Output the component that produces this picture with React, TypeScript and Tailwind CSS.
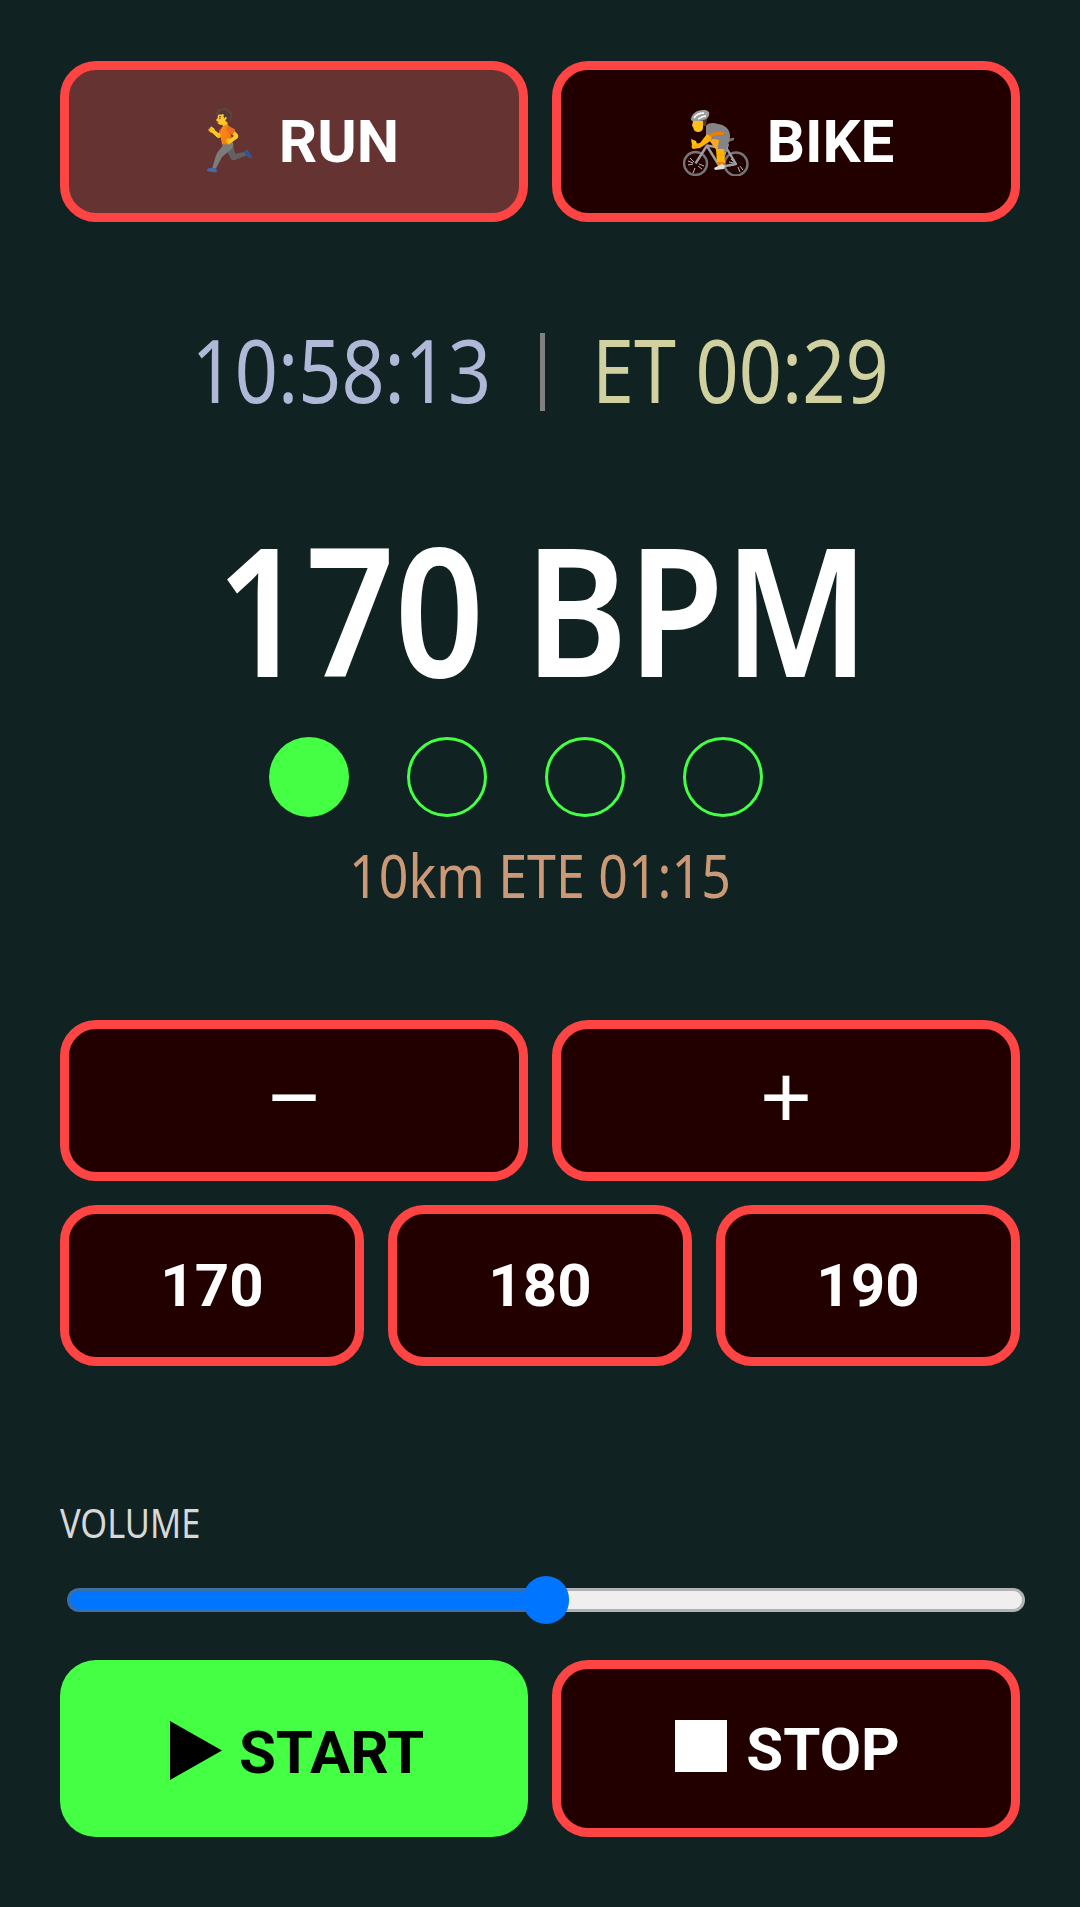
// App.tsx
import React from "react";

const btn =
  "flex items-center justify-center rounded-[36px] border-[9px] border-[#ff4444] bg-[#220000] font-bold text-white";

const BikeIcon: React.FC = () => (
  <svg width="66" height="68" viewBox="12 6 66 68" className="ml-[5px]">
    {/* wheels */}
    <circle cx="24.5" cy="61.5" r="11.5" fill="none" stroke="#757575" strokeWidth="2.4" />
    <circle cx="65" cy="62" r="11.5" fill="none" stroke="#757575" strokeWidth="2.4" />
    <path
      d="M19 56l4 4M17 59l5 2M17 63l5-1M27 64l4 3M28 62l5 2M24 66l-2 5M60 57l3 3M58 60l5 1M58 64l5-1M67 65l2 5M69 64l3 4"
      stroke="#e8e8e8"
      strokeWidth="0.8"
      fill="none"
    />
    {/* frame */}
    <path
      d="M24.5 61.5L36 43.5L56 47L65 62L49 65L36 44M49 65L57 42"
      stroke="#9e9e9e"
      strokeWidth="2.4"
      strokeLinejoin="round"
      fill="none"
    />
    <path d="M53 40l9-3" stroke="#757575" strokeWidth="2.4" strokeLinecap="round" />
    {/* hair, face */}
    <path d="M28 16h8l-1 8h-7z" fill="#543930" />
    <path d="M22 19h10v7c0 2-2 4-5 4-2 0-3-1-4-2l-1-3-1-1z" fill="#fcc21b" />
    {/* helmet */}
    <path d="M20 18c0-6 6-10 12-10 5 0 7 2 6 5-1 4-6 6-12 6-3 0-6 0-6-1z" fill="#9e9e9e" />
    <path d="M23 16c2-3 6-5 10-5M27 17c2-1 5-3 8-3" stroke="#ffffff" strokeWidth="1.6" fill="none" />
    {/* far leg */}
    <path d="M38 38l10-3 6 12-8 2z" fill="#f9a825" />
    {/* torso and shorts */}
    <path
      d="M35 24c3-4 8-3 12-2 7 1 12 5 12 12 0 6-3 10-4 16l-8-1c-1-4 1-8 1-11l-5-1c-4 0-7-1-8-3z"
      fill="#858585"
    />
    <path d="M37 33c5-3 10-4 16-3l-1 3c-5-1-9 0-14 3z" fill="#f57c00" />
    {/* arm */}
    <path d="M36 32l5 4-3 4-9 6-7 1c-2-1-2-4 0-5l7-1z" fill="#ffb300" />
    <path d="M20 37l5 2 1 3-5 1z" fill="#fcc21b" />
    {/* shin and shoe */}
    <path d="M45 47h8l1 14h-8z" fill="#ffb300" />
    <path d="M46 60h7v3h-7z" fill="#f57c00" />
    <path d="M43 66l8-4 3 2-1 3-9 1z" fill="#e0e0e0" />
  </svg>
);

const App: React.FC = () => {
  return (
    <div className="flex min-h-[1907px] w-[1080px] flex-col bg-[#112222] px-[60px] pt-[61px] font-['Roboto',sans-serif]">
      <div className="grid grid-cols-2 gap-[24px]">
        <button className={`${btn} h-[161px] bg-[#663333] text-[60px]`}>🏃 RUN</button>
        <button className={`${btn} h-[161px] gap-[18px] text-[60px]`}>
          <BikeIcon />
          <span>BIKE</span>
        </button>
      </div>

      <div className="mt-[103px] grid h-[94px] grid-cols-[1fr_auto_1fr] items-center pl-[4px] font-['Noto_Sans',sans-serif] text-[88px]">
        <span className="mr-[48px] mb-[6px] origin-right scale-x-[0.858] justify-self-end leading-none whitespace-nowrap text-[#b0b8d8]">
          10:58:13
        </span>
        <span className="h-[78px] w-[5px] bg-[#808080]"></span>
        <span className="mb-[6px] ml-[47px] origin-left scale-x-[0.858] justify-self-start leading-none whitespace-nowrap text-[#d0d0a0]">
          ET 00:29
        </span>
      </div>

      <div className="mt-[109px] scale-x-[0.868] pl-[6px] text-center font-['Noto_Sans',sans-serif] text-[180px] font-semibold leading-[160px] text-white">
        170 BPM
      </div>

      <div className="mt-[49px] flex justify-center gap-[58px] pr-[48px]">
        <div className="h-[80px] w-[80px] rounded-full bg-[#44ff44]"></div>
        <div className="h-[80px] w-[80px] rounded-full border-[3px] border-[#44ff44]"></div>
        <div className="h-[80px] w-[80px] rounded-full border-[3px] border-[#44ff44]"></div>
        <div className="h-[80px] w-[80px] rounded-full border-[3px] border-[#44ff44]"></div>
      </div>

      <div className="mt-[23px] scale-x-[0.865] text-center font-['Noto_Sans',sans-serif] text-[60px] leading-[70px] text-[#cc9977]">
        10km ETE 01:15
      </div>

      <div className="mt-[110px] grid grid-cols-2 gap-[24px]">
        <button className={`${btn} h-[161px] font-['Noto_Sans',sans-serif] text-[92px] font-normal`}>
          <span className="mb-[12px] leading-none">−</span>
        </button>
        <button className={`${btn} h-[161px] font-['Noto_Sans',sans-serif] text-[92px] font-normal`}>
          <span className="mb-[12px] leading-none">+</span>
        </button>
      </div>
      <div className="mt-[24px] grid grid-cols-3 gap-[24px]">
        <button className={`${btn} h-[161px] text-[60px]`}>170</button>
        <button className={`${btn} h-[161px] text-[60px]`}>180</button>
        <button className={`${btn} h-[161px] text-[60px]`}>190</button>
      </div>

      <div className="mt-[133px] origin-left scale-x-[0.86] font-['Noto_Sans',sans-serif] text-[40px] leading-[48px] text-[#d8d8d8]">
        VOLUME
      </div>

      <div className="relative mt-[41px] ml-[7px] flex h-[24px] w-[958px]">
        <div className="h-full w-[479px] rounded-l-full border-[3px] border-r-0 border-[#3b6ea5] bg-[#0075ff]"></div>
        <div className="h-full flex-1 rounded-r-full border-[3px] border-l-0 border-[#b2b2b2] bg-[#efefef]"></div>
        <div className="absolute left-[456px] top-[-12px] h-[48px] w-[46px] rounded-full bg-[#0075ff]"></div>
      </div>

      <div className="mt-[48px] grid grid-cols-2 gap-[24px]">
        <button className="flex h-[177px] items-center justify-center gap-[17px] rounded-[36px] bg-[#44ff44] pl-[6px] text-[60px] font-bold text-black">
          <svg width="52" height="59" viewBox="0 0 52 59" className="mt-[4px]">
            <path d="M0 0 L52 29.5 L0 59 Z" fill="#000000" />
          </svg>
          <span className="mt-[8px]">START</span>
        </button>
        <button className={`${btn} h-[177px] gap-[19px] pl-[3px] text-[60px]`}>
          <span className="mb-[6px] h-[52px] w-[52px] bg-white"></span>
          <span className="mt-[2px]">STOP</span>
        </button>
      </div>
    </div>
  );
};

export default App;
